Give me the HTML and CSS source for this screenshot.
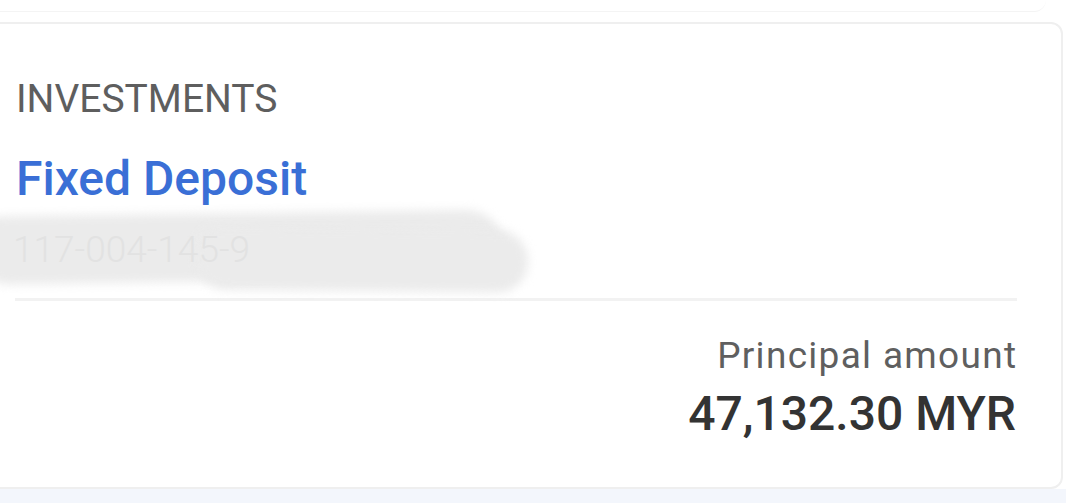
FILE: index.html
```html
<!DOCTYPE html>
<html>
<head>
<meta charset="utf-8">
<link rel="stylesheet" href="styles.css">
</head>
<body>
<div class="page">
  <div class="top">
    <div class="prev"></div>
  </div>
  <div class="card">
    <div class="label">INVESTMENTS</div>
    <div class="title">Fixed Deposit</div>
    <div class="account">
      <div class="smudge smudge-a"></div>
      <div class="smudge smudge-b"></div>
      <span class="acc-text">117-004-145-9</span>
    </div>
    <div class="divider"></div>
    <div class="amount-block">
      <div class="amount-label">Principal amount</div>
      <div class="amount">47,132.30 MYR</div>
    </div>
  </div>
</div>
</body>
</html>
```

FILE: styles.css
```css
* { box-sizing: border-box; }
html, body { margin: 0; padding: 0; }
body {
  background: #f3f6fc;
  font-family: Roboto, "Noto Sans", sans-serif;
  width: 1066px;
  height: 503px;
  overflow: hidden;
}
.page {
  background: #ffffff;
  display: flex;
  flex-direction: column;
  gap: 10px;
}
.top {
  height: 12px;
  padding-right: 20px;
}
.prev {
  height: 12px;
  border-bottom: 1px solid #f4f4f4;
  border-bottom-right-radius: 40px;
}
.card {
  margin-left: -20px;
  width: 1083px;
  height: 467px;
  border: 2px solid #efefef;
  border-radius: 12px;
  background: #ffffff;
  padding: 52px 45px 0 34px;
  display: flex;
  flex-direction: column;
}
.label {
  font-size: 39px;
  line-height: 46px;
  color: #5e5e5e;
  font-weight: 400;
}
.title {
  margin-top: 29px;
  font-size: 48px;
  line-height: 56px;
  color: #3a6fd6;
  font-weight: 500;
}
.account {
  position: relative;
  height: 91px;
  margin-left: -20px;
}
.smudge {
  position: absolute;
  background: #ebebeb;
  filter: blur(5px);
}
.smudge-a {
  left: -10px;
  top: 6px;
  width: 520px;
  height: 68px;
  border-radius: 20px 60px 40px 30px;
  transform: rotate(-0.8deg);
}
.smudge-b {
  left: 200px;
  top: 22px;
  width: 332px;
  height: 62px;
  border-radius: 20px 30px 30px 30px;
  transform: rotate(0.6deg);
}
.acc-text {
  position: absolute;
  left: 17px;
  top: 21px;
  font-size: 37px;
  line-height: 44px;
  color: #e2e2e2;
  font-weight: 300;
}
.divider {
  height: 3px;
  background: #f2f2f2;
  margin-left: -1px;
  margin-right: -1px;
}
.amount-block {
  display: flex;
  flex-direction: column;
  align-items: flex-end;
  margin-top: 33px;
}
.amount-label {
  font-size: 37px;
  line-height: 44px;
  color: #5f5f5f;
  letter-spacing: 1.3px;
  margin-right: -1.3px;
}
.amount {
  margin-top: 8px;
  font-size: 48px;
  line-height: 56px;
  color: #333333;
  font-weight: 500;
}
```
